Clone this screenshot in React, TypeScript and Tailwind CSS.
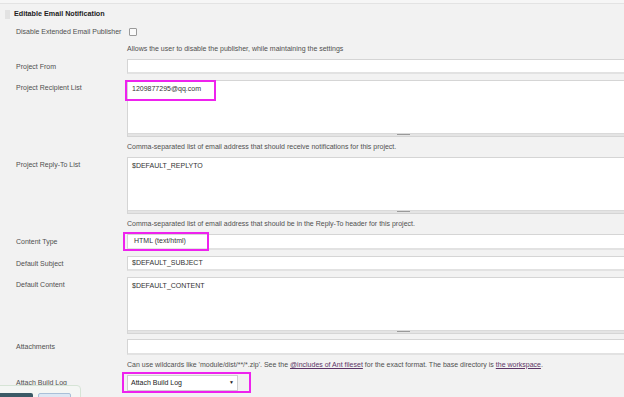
import React from 'react';

const font = { fontFamily: '"Liberation Sans", Arial, sans-serif' };

function Input({ value = '', h = 'h-[15px]', pad = 'pl-[4px]' }: { value?: string; h?: string; pad?: string }) {
  return (
    <div className={`w-[552px] ${h} ${pad} bg-white border border-[#d5d5d5] border-b-[#e2e2e2] border-b-2 flex items-center text-[7px] text-[#333]`}>
      {value}
    </div>
  );
}

function TextArea({ value = '' }: { value?: string }) {
  return (
    <div className="w-[552px] h-[57px] bg-white border border-[#d5d5d5] flex flex-col">
      <div className="flex-1 pl-[4px] pt-[3px] text-[7px] text-[#333]">{value}</div>
      <div className="h-[3px] bg-[#e4e4e4] border-t border-[#dadada] flex justify-center">
        <div className="w-[13px] h-[1px] bg-[#9a9a9a]" />
      </div>
    </div>
  );
}

function Row({ label, children, labelTop = 'pt-[3px]' }: { label: string; children: React.ReactNode; labelTop?: string }) {
  return (
    <div className="flex">
      <div className={`w-[127px] shrink-0 pl-[16px] text-[7px] text-[#505050] ${labelTop}`}>{label}</div>
      <div className="shrink-0">{children}</div>
    </div>
  );
}

function Desc({ children }: { children: React.ReactNode }) {
  return <div className="pl-[127px] text-[7px] text-[#505050] h-[20px] flex items-center whitespace-nowrap">{children}</div>;
}

export default function App() {
  return (
    <div className="w-[624px] h-[397px] bg-[#f2f2f2] overflow-hidden relative" style={font}>
      <div className="h-[4px] bg-[#f6f6f6] border-b border-[#e3e3e3]" />
      <div className="flex items-center h-[21px] pl-[5px] gap-[4px]">
        <div className="w-[5px] h-[9px] bg-[#e2e2e2]" />
        <span className="text-[7.2px] font-bold text-[#222]">Editable Email Notification</span>
      </div>
      <div className="flex items-center h-[14px]">
        <span className="w-[129px] shrink-0 pl-[16px] text-[7px] text-[#505050]">Disable Extended Email Publisher</span>
        <div className="w-[8px] h-[8px] border border-[#9a9a9a] rounded-[1px] bg-[#fafafa]" />
      </div>
      <Desc>Allows the user to disable the publisher, while maintaining the settings</Desc>
      <Row label="Project From">
        <Input />
      </Row>
      <div className="h-[6px]" />
      <Row label="Project Recipient List">
        <TextArea value="1209877295@qq.com" />
      </Row>
      <Desc>Comma-separated list of email address that should receive notifications for this project.</Desc>
      <Row label="Project Reply-To List">
        <TextArea value="$DEFAULT_REPLYTO" />
      </Row>
      <Desc>Comma-separated list of email address that should be in the Reply-To header for this project.</Desc>
      <Row label="Content Type">
        <Input value="HTML (text/html)" h="h-[16px]" pad="pl-[6px]" />
      </Row>
      <div className="h-[6px]" />
      <Row label="Default Subject">
        <Input value="$DEFAULT_SUBJECT" />
      </Row>
      <div className="h-[6px]" />
      <Row label="Default Content">
        <TextArea value="$DEFAULT_CONTENT" />
      </Row>
      <div className="h-[5px]" />
      <Row label="Attachments">
        <Input h="h-[16px]" />
      </Row>
      <Desc>
        Can use wildcards like 'module/dist/**/*.zip'. See the&nbsp;
        <span className="underline text-[#5c3566]">@includes of Ant fileset</span>
        &nbsp;for the exact format. The base directory is&nbsp;
        <span className="underline text-[#5c3566]">the workspace</span>.
      </Desc>
      <Row label="Attach Build Log">
        <div className="w-[111px] h-[16px] bg-white border border-[#cfcfcf] flex items-center justify-between px-[3px] text-[7px] text-[#222]">
          <span>Attach Build Log</span>
          <span className="text-[5px]">▼</span>
        </div>
      </Row>

      {/* annotation highlights */}
      <div className="absolute left-[125px] top-[80px] w-[91px] h-[21px] border-2 border-[#ee22ee]" />
      <div className="absolute left-[123px] top-[232px] w-[86px] h-[19px] border-2 border-[#ee22ee]" />
      <div className="absolute left-[122px] top-[372px] w-[129px] h-[21px] border-2 border-[#ee22ee]" />

      {/* floating button bar */}
      <div className="absolute left-[-4px] top-[385px] w-[85px] h-[20px] rounded-[4px] border border-[#d6e4d6] bg-[#f4f6f4]">
        <div className="absolute left-[0px] top-[7px] w-[36px] h-[12px] bg-[#3b5a66] rounded-[2px]" />
        <div className="absolute left-[41px] top-[7px] w-[33px] h-[12px] bg-[#dde7f3] border border-[#a9bfd8] rounded-[2px]" />
      </div>
    </div>
  );
}
